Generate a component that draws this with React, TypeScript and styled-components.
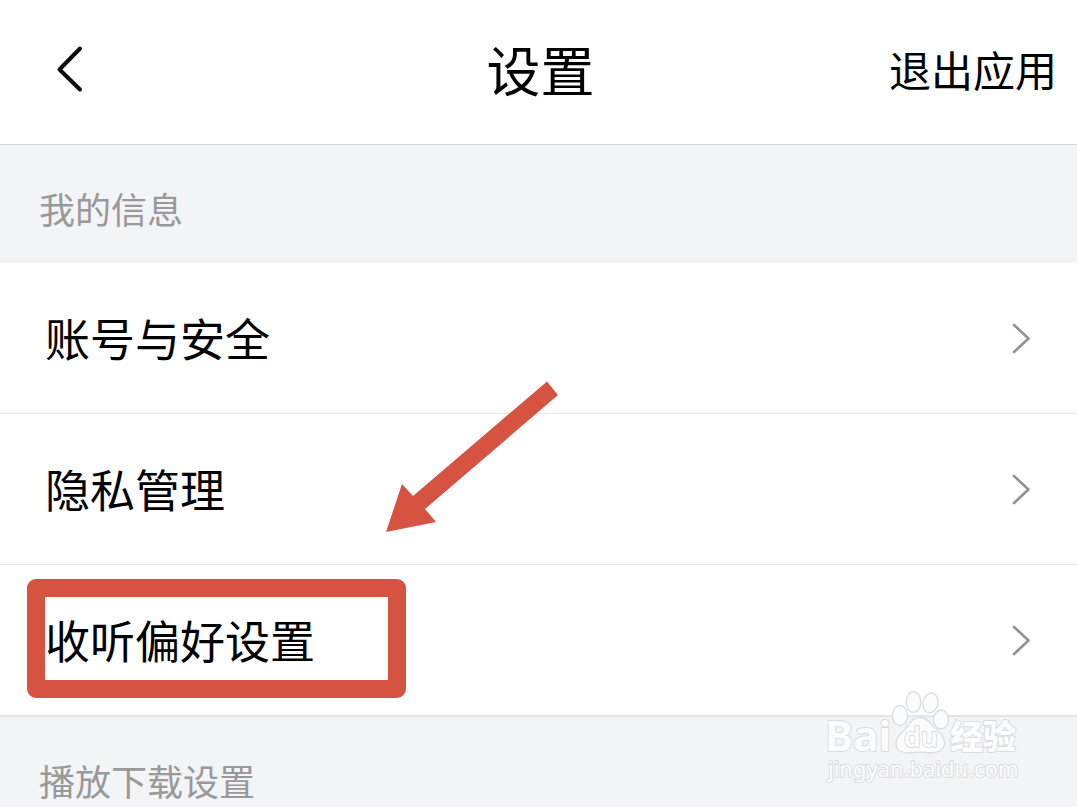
import React from "react";
import styled, { createGlobalStyle } from "styled-components";

const GlobalStyle = createGlobalStyle`
  *, *::before, *::after { box-sizing: border-box; }
  body {
    margin: 0;
    background: #f3f4f6;
    color: #000;
    font-family: "Noto Sans CJK SC", sans-serif;
  }
`;

const Page = styled.main`
  position: relative;
  min-height: 100vh;
  overflow: hidden;
`;

const Header = styled.header`
  display: grid;
  grid-template-columns: 1fr auto 1fr;
  align-items: center;
  height: 145px;
  padding: 0 20px 6px 44px;
  background: #fff;
  border-bottom: 1px solid #d6d7d9;
`;

const Title = styled.h1`
  margin: 0;
  padding-right: 20px;
  font-size: 54px;
  line-height: 72px;
  font-weight: 400;
`;

const PlainButton = styled.button<{ $end?: boolean }>`
  display: flex;
  justify-self: ${(p) => (p.$end ? "end" : "start")};
  padding: 0;
  border: 0;
  background: none;
  color: inherit;
  font: inherit;
  font-size: 42px;
  line-height: 56px;
  white-space: nowrap;
  cursor: pointer;
`;

const SectionTitle = styled.h2<{ $last?: boolean }>`
  margin: 0;
  padding: 39px 39px ${(p) => (p.$last ? 0 : 31)}px;
  font-size: 36px;
  line-height: 48px;
  font-weight: 400;
  color: #999;
`;

const List = styled.ul`
  margin: 0;
  padding: 0;
  list-style: none;
  background: #fff;
  border-bottom: 1px solid #e4e5e6;
`;

const Item = styled.li`
  position: relative;
  border-bottom: 1px solid #e4e5e6;
`;

const RowLink = styled.a`
  display: flex;
  align-items: center;
  justify-content: space-between;
  height: 150px;
  padding: 0 46px 0 45px;
  color: inherit;
  text-decoration: none;
  font-size: 45px;
  line-height: 60px;
`;

const Highlight = styled.span`
  position: absolute;
  top: 14px;
  left: 27px;
  width: 379px;
  height: 119px;
  border: 18px solid #d65241;
  border-radius: 9px;
  pointer-events: none;
`;

const Arrow = styled.svg`
  position: absolute;
  top: 380px;
  left: 384px;
  pointer-events: none;
`;

const Watermark = styled.svg`
  position: absolute;
  top: 687px;
  right: 49px;
  pointer-events: none;
`;

const rows = [
  { label: "账号与安全" },
  { label: "隐私管理" },
  { label: "收听偏好设置", marked: true },
];

const BackIcon = () => (
  <svg width="40" height="50" viewBox="0 0 40 50" fill="none" aria-hidden="true">
    <path d="M36 4.500L15.500 25.500L36 45.500" stroke="#0c0c0c" strokeWidth="4" strokeLinecap="round" strokeLinejoin="round" />
  </svg>
);

const Chevron = () => (
  <svg width="20" height="32" viewBox="0 0 20 32" fill="none" aria-hidden="true">
    <path d="M3 3L17.500 16.500L3 30" stroke="#939393" strokeWidth="2.600" strokeLinecap="round" strokeLinejoin="round" />
  </svg>
);

const BaiduMark = () => (
  <Watermark width="202" height="100" viewBox="0 0 202 100" role="img" aria-label="Baidu 经验">
    <g fill="#fbfcfd" stroke="#dcdddf" strokeWidth="1.300" strokeLinejoin="round">
      <ellipse cx="74" cy="28.500" rx="7.500" ry="10" />
      <ellipse cx="87.500" cy="15" rx="7.300" ry="10.300" />
      <ellipse cx="104.500" cy="16" rx="7.500" ry="10" transform="rotate(12 104.500 16)" />
      <ellipse cx="115" cy="32.500" rx="7.500" ry="9.500" />
      <path d="M94 30.500C101 30.500 104 36 108 40C114 46 119 50 118.500 57C118 63 112 66 105 66C100 65 88 65 83 66C76 66 70 63 70 56C70 49 76 46 80 41C84 36 87 30.500 94 30.500Z" />
      <g fontFamily='"Open Sans", sans-serif' paintOrder="stroke" strokeWidth="2">
        <text x="-1" y="64" fontSize="42" fontWeight="700">Bai</text>
        <text x="78" y="60" fontSize="27" fontWeight="600">du</text>
      </g>
      <text x="124" y="62" fontSize="33" fontWeight="900" fontFamily='"Noto Sans CJK SC", sans-serif' paintOrder="stroke" strokeWidth="2">经验</text>
      <text x="2" y="90" fontSize="22" fontFamily='"Noto Sans", sans-serif' paintOrder="stroke" strokeWidth="2">jingyan.baidu.com</text>
    </g>
  </Watermark>
);

export default function App() {
  return (
    <>
      <GlobalStyle />
      <Page>
        <Header>
          <PlainButton type="button" aria-label="返回">
            <BackIcon />
          </PlainButton>
          <Title>设置</Title>
          <PlainButton type="button" $end>退出应用</PlainButton>
        </Header>
        <SectionTitle>我的信息</SectionTitle>
        <List>
          {rows.map((row) => (
            <Item key={row.label}>
              <RowLink href="#">
                {row.label}
                <Chevron />
              </RowLink>
              {row.marked && <Highlight />}
            </Item>
          ))}
        </List>
        <SectionTitle $last>播放下载设置</SectionTitle>
        <Arrow width="176" height="154" viewBox="0 0 176 154" aria-hidden="true">
          <path d="M2 152L18 104L29 116L163 1.500L174 15L41 129L52 142Z" fill="#d65241" />
        </Arrow>
        <BaiduMark />
      </Page>
    </>
  );
}
